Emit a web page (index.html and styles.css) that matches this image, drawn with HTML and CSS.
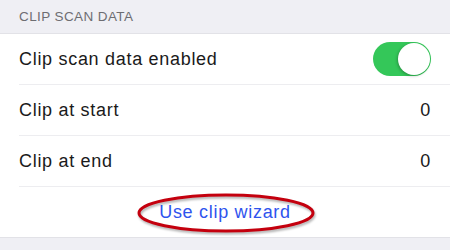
FILE: index.html
```html
<!DOCTYPE html>
<html lang="en">
<head>
  <meta charset="UTF-8">
  <meta name="viewport" content="width=device-width, initial-scale=1.0">
  <title>Clip scan data</title>
  <link rel="stylesheet" href="styles.css">
</head>
<body>
  <div class="section-header">CLIP SCAN DATA</div>

  <div class="group">
    <div class="row">
      <span class="label">Clip scan data enabled</span>
      <span class="toggle on"><span class="knob"></span></span>
    </div>
    <div class="row">
      <span class="label">Clip at start</span>
      <span class="value">0</span>
    </div>
    <div class="row">
      <span class="label">Clip at end</span>
      <span class="value">0</span>
    </div>
    <div class="row action">
      <a class="link" href="#">Use clip wizard</a>
      <svg class="circle" width="180" height="42" viewBox="0 0 180 42">
        <ellipse cx="90" cy="21" rx="87" ry="18" fill="none" stroke="#c4000e" stroke-width="3"/>
      </svg>
    </div>
  </div>
</body>
</html>
```

FILE: styles.css
```css
body {
  margin: 0;
  background-color: #efeff4;
  font-family: "Liberation Sans", Arial, sans-serif;
}
.section-header {
  height: 33px;
  padding: 0 19px;
  display: flex;
  align-items: center;
  font-size: 13.5px;
  letter-spacing: 0.4px;
  color: #6d6d72;
  border-bottom: 1px solid #e2e2e7;
}
.group {
  background-color: #fff;
  padding-left: 19px;
  border-bottom: 1px solid #e2e2e7;
}
.row {
  height: 50px;
  display: flex;
  align-items: center;
  justify-content: space-between;
  padding-right: 19px;
  border-bottom: 1px solid #ededf0;
  font-size: 18px;
  letter-spacing: 0.7px;
  color: #1a1a1a;
}
.row:last-child {
  border-bottom: none;
}
.toggle {
  width: 58px;
  height: 34px;
  border-radius: 17px;
  background-color: #34c759;
  display: flex;
  align-items: center;
  justify-content: flex-end;
  padding: 1px;
  box-sizing: border-box;
}
.knob {
  width: 32px;
  height: 32px;
  border-radius: 50%;
  background-color: #fff;
  box-shadow: -1px 1px 3px rgba(0, 0, 0, 0.25);
}
.action {
  position: relative;
  justify-content: center;
  padding-right: 0;
  margin-left: -19px;
}
.link {
  color: #2f54ee;
  text-decoration: none;
}
.circle {
  position: absolute;
  left: 136px;
  top: 5px;
  filter: drop-shadow(1px 2px 1px rgba(0, 0, 0, 0.3));
}
```
